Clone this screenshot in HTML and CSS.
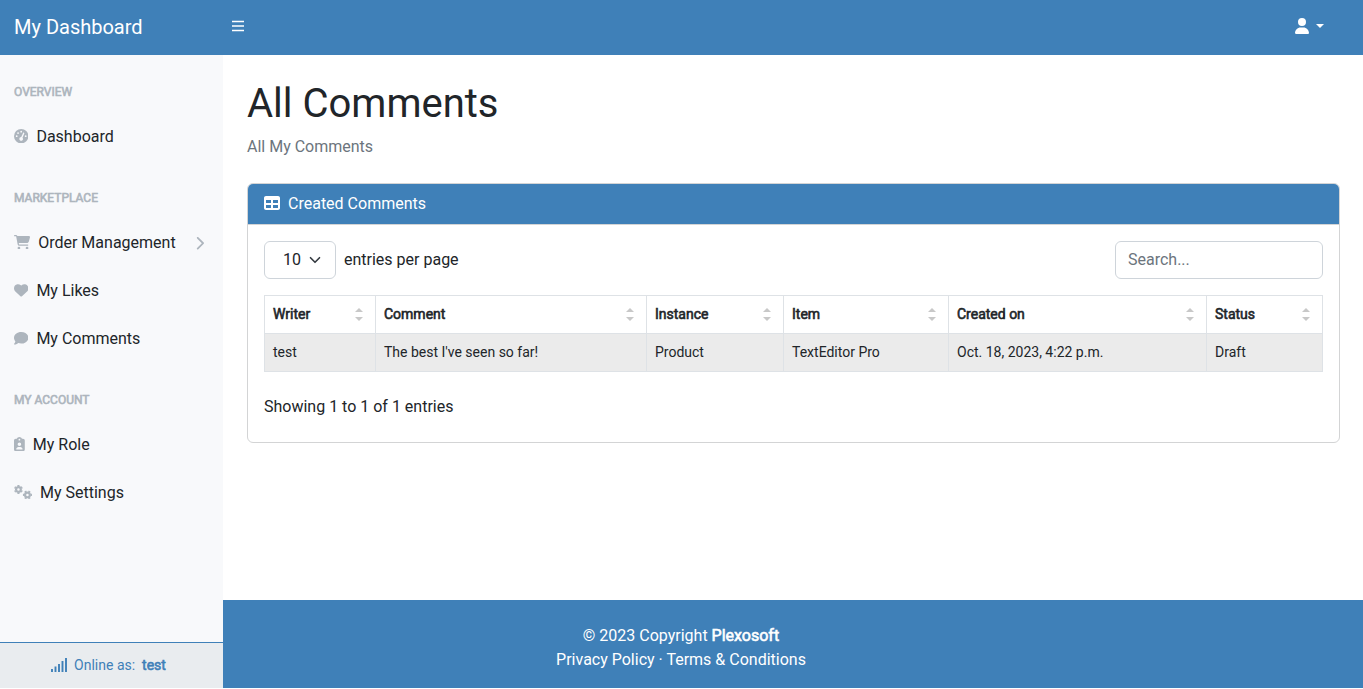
FILE: index.html
```html
<!DOCTYPE html>
<html lang="en">
<head>
<meta charset="utf-8">
<title>My Dashboard</title>
<link rel="stylesheet" href="styles.css">
</head>
<body>
<header class="topnav">
  <a class="brand">My Dashboard</a>
  <svg class="bars" viewBox="0 0 12 12"><path d="M0 1.500h12M0 6h12M0 10.500h12" stroke="currentColor" stroke-width="1.700"/></svg>
  <div class="user">
    <svg class="user-icon" viewBox="0 0 448 512"><path d="M224 256A128 128 0 1 0 224 0a128 128 0 1 0 0 256zm-45.7 48C79.800 304 0 383.800 0 482.300C0 498.700 13.300 512 29.700 512H418.300c16.400 0 29.700-13.300 29.700-29.700C448 383.800 368.200 304 269.700 304H178.300z"/></svg>
    <span class="caret"></span>
  </div>
</header>
<div class="layout">
  <aside class="sidebar">
    <nav class="menu">
      <div class="heading">OVERVIEW</div>
      <a class="link"><svg class="ico" viewBox="0 0 512 512"><path fill-rule="evenodd" d="M0 256a256 256 0 1 1 512 0A256 256 0 1 1 0 256zM288 96a32 32 0 1 0-64 0 32 32 0 1 0 64 0zM256 416c35.300 0 64-28.700 64-64c0-17.400-6.900-33.100-18.100-44.600L366 161.700c5.300-12.100-.2-26.300-12.300-31.600s-26.300 .2-31.600 12.300L257.900 288c-.6 0-1.300 0-1.900 0c-35.300 0-64 28.700-64 64s28.700 64 64 64zM176 144a32 32 0 1 0-64 0 32 32 0 1 0 64 0zM96 288a32 32 0 1 0 0-64 32 32 0 1 0 0 64zm352-32a32 32 0 1 0-64 0 32 32 0 1 0 64 0z"/></svg>Dashboard</a>
      <div class="heading">MARKETPLACE</div>
      <a class="link"><svg class="ico cart" viewBox="0 0 576 512"><path d="M0 24C0 10.700 10.700 0 24 0H69.500c22 0 41.500 12.800 50.600 32h411c26.300 0 45.500 25 38.600 50.400l-41 152.300c-8.500 31.400-37 53.300-69.500 53.300H170.700l5.400 28.500c2.200 11.300 12.100 19.500 23.600 19.500H488c13.300 0 24 10.700 24 24s-10.700 24-24 24H199.700c-34.600 0-64.300-24.600-70.700-58.500L77.400 54.500c-.7-3.800-4-6.500-7.900-6.500H24C10.700 48 0 37.300 0 24zM128 464a48 48 0 1 1 96 0 48 48 0 1 1 -96 0zm336-48a48 48 0 1 1 0 96 48 48 0 1 1 0-96z"/></svg>Order Management<svg class="chev" viewBox="0 0 320 512"><path d="M310.600 233.400c12.500 12.500 12.500 32.800 0 45.300l-192 192c-12.500 12.500-32.800 12.500-45.300 0s-12.500-32.800 0-45.300L242.700 256 73.400 86.600c-12.500-12.500-12.500-32.800 0-45.300s32.800-12.500 45.300 0l192 192z"/></svg></a>
      <a class="link"><svg class="ico" viewBox="0 0 512 512"><path d="M47.600 300.400L228.300 469.100c7.500 7 17.400 10.900 27.700 10.900s20.200-3.900 27.700-10.900L464.400 300.400c30.400-28.300 47.600-68 47.600-109.500v-5.800c0-69.900-50.500-129.500-119.400-141C347 36.500 300.600 51.400 268 84L256 96 244 84c-32.600-32.600-79-47.500-124.600-39.900C50.500 55.600 0 115.200 0 185.100v5.800c0 41.500 17.200 81.200 47.600 109.500z"/></svg>My Likes</a>
      <a class="link"><svg class="ico" viewBox="0 0 512 512"><path d="M512 240c0 114.900-114.600 208-256 208c-37.100 0-72.300-6.400-104.100-17.900c-11.900 8.700-31.300 20.600-54.300 30.600C73.600 471.100 44.700 480 16 480c-6.500 0-12.300-3.900-14.800-9.900c-2.500-6-1.100-12.800 3.400-17.400l.3-.3c.3-.3 .7-.7 1.300-1.400c1.100-1.200 2.800-3.100 4.900-5.700c4.100-5 9.600-12.400 15.200-21.600c10-16.600 19.500-38.400 21.400-62.900C17.700 326.800 0 285.100 0 240C0 125.100 114.600 32 256 32s256 93.100 256 208z"/></svg>My Comments</a>
      <div class="heading">MY ACCOUNT</div>
      <a class="link"><svg class="ico badge" viewBox="0 0 384 512"><path fill-rule="evenodd" d="M192 0c-41.800 0-77.400 26.700-90.500 64H64C28.700 64 0 92.700 0 128V448c0 35.300 28.700 64 64 64H320c35.300 0 64-28.700 64-64V128c0-35.300-28.700-64-64-64H282.500C269.400 26.700 233.800 0 192 0zm0 64a32 32 0 1 1 0 64 32 32 0 1 1 0-64zM128 256a64 64 0 1 1 128 0 64 64 0 1 1 -128 0zM80 432c0-44.200 35.800-80 80-80h64c44.200 0 80 35.800 80 80c0 8.800-7.200 16-16 16H96c-8.800 0-16-7.200-16-16z"/></svg>My Role</a>
      <a class="link"><svg class="ico gears" viewBox="0 0 640 512"><g fill="none" stroke="currentColor"><circle cx="158" cy="160" r="84" stroke-width="78"/><path d="M158 50V0M158 270v50M63 105l-42-24M253 215l42 24M63 215l-42 24M253 105l42-24" stroke-width="74"/><circle cx="478" cy="352" r="84" stroke-width="78"/><path d="M368 352h-50M588 352h50M423 257l-24-42M533 447l24 42M533 257l24-42M423 447l-24 42" stroke-width="74"/></g></svg>My Settings</a>
    </nav>
    <div class="online"><svg class="signal" viewBox="0 0 16 14"><path d="M1 11v3M4.500 8.500V14M8 6v8M11.500 3v11M15 0v14" stroke="currentColor" stroke-width="1.900" fill="none"/></svg>Online as: <span class="fb name">test</span></div>
  </aside>
  <div class="content">
    <main>
      <h1>All Comments</h1>
      <div class="crumb">All My Comments</div>
      <section class="card">
        <div class="card-header"><svg class="table-icon" viewBox="0 0 512 512"><path d="M64 256V160H224v96H64zm0 64H224v96H64V320zm224 96V320H448v96H288zM448 256H288V160H448v96zM64 32C28.700 32 0 60.700 0 96V416c0 35.300 28.700 64 64 64H448c35.300 0 64-28.700 64-64V96c0-35.300-28.700-64-64-64H64z"/></svg>Created Comments</div>
        <div class="card-body">
          <div class="tools">
            <div class="select">10<svg class="down" viewBox="0 0 16 16"><path d="m2 5 6 6 6-6" fill="none" stroke="#343a40" stroke-width="2.200" stroke-linecap="round" stroke-linejoin="round"/></svg></div>
            <span class="per">entries per page</span>
            <input class="search" placeholder="Search...">
          </div>
          <table class="grid">
            <colgroup><col class="c1"><col class="c2"><col class="c3"><col class="c4"><col class="c5"><col class="c6"></colgroup>
            <thead><tr>
              <th><div class="th"><span class="fb">Writer</span><i class="sort"></i></div></th>
              <th><div class="th"><span class="fb">Comment</span><i class="sort"></i></div></th>
              <th><div class="th"><span class="fb">Instance</span><i class="sort"></i></div></th>
              <th><div class="th"><span class="fb">Item</span><i class="sort"></i></div></th>
              <th><div class="th"><span class="fb">Created on</span><i class="sort"></i></div></th>
              <th><div class="th"><span class="fb">Status</span><i class="sort"></i></div></th>
            </tr></thead>
            <tbody><tr><td>test</td><td>The best I've seen so far!</td><td>Product</td><td>TextEditor Pro</td><td>Oct. 18, 2023, 4:22 p.m.</td><td>Draft</td></tr></tbody>
          </table>
          <div class="info">Showing 1 to 1 of 1 entries</div>
        </div>
      </section>
    </main>
    <footer class="footer">
      <div>© 2023 Copyright <span class="fb">Plexosoft</span></div>
      <div>Privacy Policy · Terms &amp; Conditions</div>
    </footer>
  </div>
</div>
</body>
</html>
```
FILE: styles.css
```css
* { box-sizing: border-box; }
body { margin: 0; height: 688px; display: flex; flex-direction: column; overflow: hidden; font: 400 16px/24px Roboto, sans-serif; color: #212529; background: #fff; }
svg { display: block; flex: none; fill: currentColor; }
.fb { -webkit-text-stroke: 0.6px currentColor; }
.topnav { height: 55px; flex: none; display: flex; align-items: center; background: #3f80b8; color: #fff; padding: 0 39px 2px 14px; }
.brand { width: 218px; font-size: 20px; line-height: 30px; }
.bars { width: 12px; height: 12px; margin-bottom: 1px; }
.user { margin-left: auto; display: flex; align-items: center; gap: 7px; margin-bottom: 1px; }
.user-icon { width: 14px; height: 16px; }
.caret { border: 4px solid transparent; border-top-color: #fff; border-bottom: 0; }
.layout { flex: 1; display: flex; min-height: 0; }
.sidebar { width: 223px; flex: none; display: flex; flex-direction: column; background: #f8f9fb; }
.menu { flex: 1; }
.heading { padding: 28px 14px 12px; font-size: 12px; line-height: 18px; color: #adb5bd; -webkit-text-stroke: 0.6px currentColor; }
.link { display: flex; align-items: center; height: 48px; padding: 0 14px; }
.ico { width: 14.4px; height: 14.4px; margin-right: 8px; margin-bottom: 2px; color: #adb5bd; }
.cart { width: 16.2px; }
.badge { width: 10.8px; }
.gears { width: 18px; }
.chev { width: 9px; height: 14.4px; margin-left: auto; margin-right: 5px; color: #adb5bd; }
.online { height: 46px; display: flex; align-items: center; justify-content: center; border-top: 1px solid #3f80b8; background: #e9ecef; color: #3f80b8; font-size: 14px; line-height: 21px; padding-right: 6px; }
.signal { width: 16px; height: 14px; margin: 0 7px 1px 0; }
.name { margin-left: 7px; }
.content { flex: 1; display: flex; flex-direction: column; min-width: 0; }
main { flex: 1; padding: 25px 23px 0 24px; }
h1 { margin: 0 0 7px; font-size: 40px; line-height: 48px; font-weight: 400; }
.crumb { color: #6c757d; margin-bottom: 24px; }
.card { border: 1px solid #d3d4d5; border-radius: 6px; overflow: hidden; height: 260px; }
.card-header { height: 41px; display: flex; align-items: center; padding: 0 16px; border-bottom: 1px solid #d3d4d5; background: #3f80b8; color: #fff; }
.table-icon { width: 16px; height: 16px; margin: 0 8px 2px 0; }
.card-body { padding: 16px; }
.tools { display: flex; align-items: center; height: 38px; margin-bottom: 16px; }
.select { width: 72px; height: 38px; border: 1px solid #ced4da; border-radius: 6px; display: flex; align-items: center; justify-content: center; gap: 8px; padding-left: 4px; }
.down { width: 12px; height: 12px; }
.per { margin-left: 8px; }
.search { margin-left: auto; width: 208px; height: 38px; border: 1px solid #ced4da; border-radius: 6px; padding: 5px 12px 7px; font: inherit; }
.search::placeholder { color: #6c757d; }
.grid { width: 1059px; border-collapse: collapse; table-layout: fixed; font-size: 14px; line-height: 21px; }
.c1 { width: 111px; } .c2 { width: 271px; } .c3 { width: 137px; } .c4 { width: 165px; } .c5 { width: 258px; }
th, td { height: 38px; padding: 0 8px; border: 1px solid #dee2e6; text-align: left; font-weight: 400; }
td { background: #ebebeb; }
.th { display: flex; align-items: center; justify-content: space-between; }
.sort { display: flex; flex-direction: column; gap: 5px; margin-right: 4px; }
.sort::before, .sort::after { content: ""; border: 4px solid transparent; }
.sort::before { border-top: 0; border-bottom-color: #c8c8c8; }
.sort::after { border-bottom: 0; border-top-color: #c8c8c8; }
.info { margin-top: 23px; }
.footer { height: 88px; padding: 24px 224px 0 0; background: #3f80b8; color: #fff; text-align: center; }
```
